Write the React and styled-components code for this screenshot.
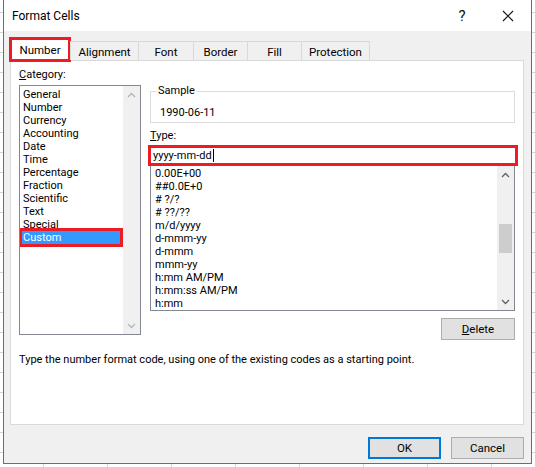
import React from 'react';
import styled, { createGlobalStyle } from 'styled-components';

const Global = createGlobalStyle`
  html, body { margin: 0; padding: 0; }
  body { font-family: Roboto, "Noto Sans", sans-serif; }
  * { box-sizing: border-box; }
`;

const Desktop = styled.div`
  width: 535px;
  height: 467px;
  padding: 0 3px;
  background-color: #fff;
  background-image:
    linear-gradient(to bottom, #d4d4d4 1px, transparent 1px),
    linear-gradient(to right, #d4d4d4 1px, transparent 1px);
  background-size: 100% 20px, 64px 100%;
  background-position: 0 12px, 43px 0;
  overflow: hidden;
`;

const Window = styled.div`
  width: 529px;
  height: 464px;
  border: 1px solid #1883d7;
  border-top: none;
  background: #f0f0f0;
  display: flex;
  flex-direction: column;
  font-size: 11px;
  color: #000;
`;

const TitleBar = styled.div`
  height: 31px;
  flex: none;
  background: #fff;
  display: flex;
  align-items: center;
  padding-left: 8px;
`;

const Title = styled.div`
  font-size: 12px;
  flex: 1;
`;

const TitleButton = styled.div`
  width: 46px;
  height: 31px;
  display: flex;
  align-items: center;
  justify-content: center;
  font-size: 15px;
  color: #111;
`;

const Body = styled.div`
  flex: 1;
  display: flex;
  flex-direction: column;
  padding: 6px 7px 4px 6px;
`;

const TabRow = styled.div`
  display: flex;
  align-items: flex-end;
  height: 23px;
  margin-left: -1px;
  position: relative;
  z-index: 1;
`;

const Tab = styled.div`
  width: ${p => p.$w}px;
  height: ${p => (p.$active ? 25 : 19)}px;
  margin-bottom: ${p => (p.$active ? -2 : 0)}px;
  margin-left: ${p => (p.$first ? 0 : -1)}px;
  display: flex;
  align-items: center;
  justify-content: center;
  padding-top: ${p => (p.$active ? 1 : 2)}px;
  background: ${p => (p.$active ? '#fff' : '#f0f0f0')};
  border: ${p => (p.$active ? '3px solid #ec1c24' : '1px solid #d9d9d9')};
  border-bottom: ${p => (p.$active ? '3px solid #ec1c24' : 'none')};
  font-size: 11.5px;
`;

const Panel = styled.div`
  height: 365px;
  flex: none;
  border: 1px solid #d9d9d9;
  background: #fff;
  padding: 7px 8px 0 8px;
  display: flex;
  flex-direction: column;
`;

const Columns = styled.div`
  display: grid;
  grid-template-columns: 122px 365px;
  column-gap: 9px;
`;

const LeftCol = styled.div`
  display: flex;
  flex-direction: column;
`;

const RightCol = styled.div`
  display: flex;
  flex-direction: column;
  padding-top: 17px;
`;

const Label = styled.div`
  height: 14px;
  line-height: 14px;
  margin-top: ${p => p.$mt || 0}px;
  margin-bottom: ${p => p.$mb || 0}px;
`;

const ListBox = styled.div`
  height: ${p => p.$h}px;
  border: 1px solid #828790;
  ${p => (p.$noTop ? 'border-top: none;' : '')}
  display: flex;
  background: #fff;
`;

const Items = styled.div`
  flex: 1;
  padding-top: ${p => p.$pt}px;
  overflow: hidden;
`;

const Item = styled.div`
  height: 13px;
  line-height: 13px;
  padding-left: ${p => p.$pl}px;
  white-space: nowrap;
`;

const SelectedItem = styled(Item)`
  background: #3399ff;
  color: #fff;
  margin: 0 3px 0 2px;
  padding-left: 1px;
  outline: 3px solid #ec1c24;
`;

const ScrollBar = styled.div`
  width: 17px;
  flex: none;
  background: #f0f0f0;
  display: flex;
  flex-direction: column;
`;

const Arrow = styled.div`
  height: 17px;
  flex: none;
  display: flex;
  align-items: center;
  justify-content: center;
`;

const Track = styled.div`
  flex: 1;
  display: flex;
  flex-direction: column;
`;

const Thumb = styled.div`
  height: 29px;
  margin: ${p => p.$top}px 2px 0 2px;
  background: #cdcdcd;
`;

const Chevron = ({ up, color }) => (
  <svg width="9" height="6" viewBox="0 0 9 6">
    <polyline
      points={up ? '1,5 4.5,1.5 8,5' : '1,1 4.5,4.5 8,1'}
      fill="none"
      stroke={color}
      strokeWidth="1.3"
    />
  </svg>
);

const Group = styled.fieldset`
  margin: 0;
  border: 1px solid #dcdcdc;
  padding: 0 8px 3px 8px;
  height: 38px;
`;

const Legend = styled.legend`
  padding: 0 1px;
  margin-left: -2px;
  line-height: 12px;
`;

const SampleValue = styled.div`
  height: 13px;
  line-height: 13px;
  margin-top: 9px;
  padding-left: 1px;
`;

const TypeInput = styled.div`
  height: 21px;
  margin: 0 -3px 0 -2px;
  border: 3px solid #ec1c24;
  padding-left: 2px;
  display: flex;
  align-items: center;
  background: #fff;
`;

const Caret = styled.span`
  display: inline-block;
  width: 1px;
  height: 13px;
  background: #000;
  margin-left: 1px;
`;

const Button = styled.div`
  width: ${p => p.$w}px;
  height: 22px;
  display: flex;
  align-items: center;
  justify-content: center;
  background: #e1e1e1;
  border: ${p => (p.$default ? '2px solid #0078d7' : '1px solid #adadad')};
  font-size: 11.5px;
`;

const DeleteRow = styled.div`
  display: flex;
  justify-content: flex-end;
  margin-top: 7px;
`;

const Description = styled.div`
  margin-top: 13px;
  line-height: 14px;
`;

const Footer = styled.div`
  display: flex;
  justify-content: flex-end;
  gap: 10px;
  margin-top: 12px;
`;

const tabs = [
  ['Number', 62],
  ['Alignment', 69],
  ['Font', 56],
  ['Border', 55],
  ['Fill', 55],
  ['Protection', 69],
];

const categories = [
  'General', 'Number', 'Currency', 'Accounting', 'Date', 'Time',
  'Percentage', 'Fraction', 'Scientific', 'Text', 'Special',
];

const formats = [
  '0.00E+00', '##0.0E+0', '# ?/?', '# ??/??', 'm/d/yyyy', 'd-mmm-yy',
  'd-mmm', 'mmm-yy', 'h:mm AM/PM', 'h:mm:ss AM/PM', 'h:mm',
];

export default function App() {
  return (
    <>
      <Global />
      <Desktop>
        <Window>
          <TitleBar>
            <Title>Format Cells</Title>
            <TitleButton>?</TitleButton>
            <TitleButton>
              <svg width="12" height="12" viewBox="0 0 12 12">
                <path d="M1 1 L11 11 M11 1 L1 11" stroke="#111" strokeWidth="1.1" />
              </svg>
            </TitleButton>
          </TitleBar>
          <Body>
            <TabRow>
              {tabs.map(([t, w], i) => (
                <Tab key={t} $w={w} $active={i === 0} $first={i === 0}>{t}</Tab>
              ))}
            </TabRow>
            <Panel>
              <Columns>
                <LeftCol>
                  <Label $mb={3}><u>C</u>ategory:</Label>
                  <ListBox $h={250}>
                    <Items $pt={2}>
                      {categories.map(c => (
                        <Item key={c} $pl={3}>{c}</Item>
                      ))}
                      <SelectedItem $pl={1}>Custom</SelectedItem>
                    </Items>
                    <ScrollBar>
                      <Arrow><Chevron up color="#b4b4b4" /></Arrow>
                      <Track />
                      <Arrow><Chevron color="#b4b4b4" /></Arrow>
                    </ScrollBar>
                  </ListBox>
                </LeftCol>
                <RightCol>
                  <Group>
                    <Legend>Sample</Legend>
                    <SampleValue>1990-06-11</SampleValue>
                  </Group>
                  <Label $mt={6} $mb={2}><u>T</u>ype:</Label>
                  <TypeInput>yyyy-mm-dd<Caret /></TypeInput>
                  <ListBox $h={145} $noTop>
                    <Items $pt={1}>
                      {formats.map(f => (
                        <Item key={f} $pl={4}>{f}</Item>
                      ))}
                    </Items>
                    <ScrollBar>
                      <Arrow><Chevron up color="#606060" /></Arrow>
                      <Track><Thumb $top={41} /></Track>
                      <Arrow><Chevron color="#606060" /></Arrow>
                    </ScrollBar>
                  </ListBox>
                  <DeleteRow>
                    <Button $w={74}><u>D</u>elete</Button>
                  </DeleteRow>
                </RightCol>
              </Columns>
              <Description>
                Type the number format code, using one of the existing codes as a starting point.
              </Description>
            </Panel>
            <Footer>
              <Button $w={73} $default>OK</Button>
              <Button $w={73}>Cancel</Button>
            </Footer>
          </Body>
        </Window>
      </Desktop>
    </>
  );
}
